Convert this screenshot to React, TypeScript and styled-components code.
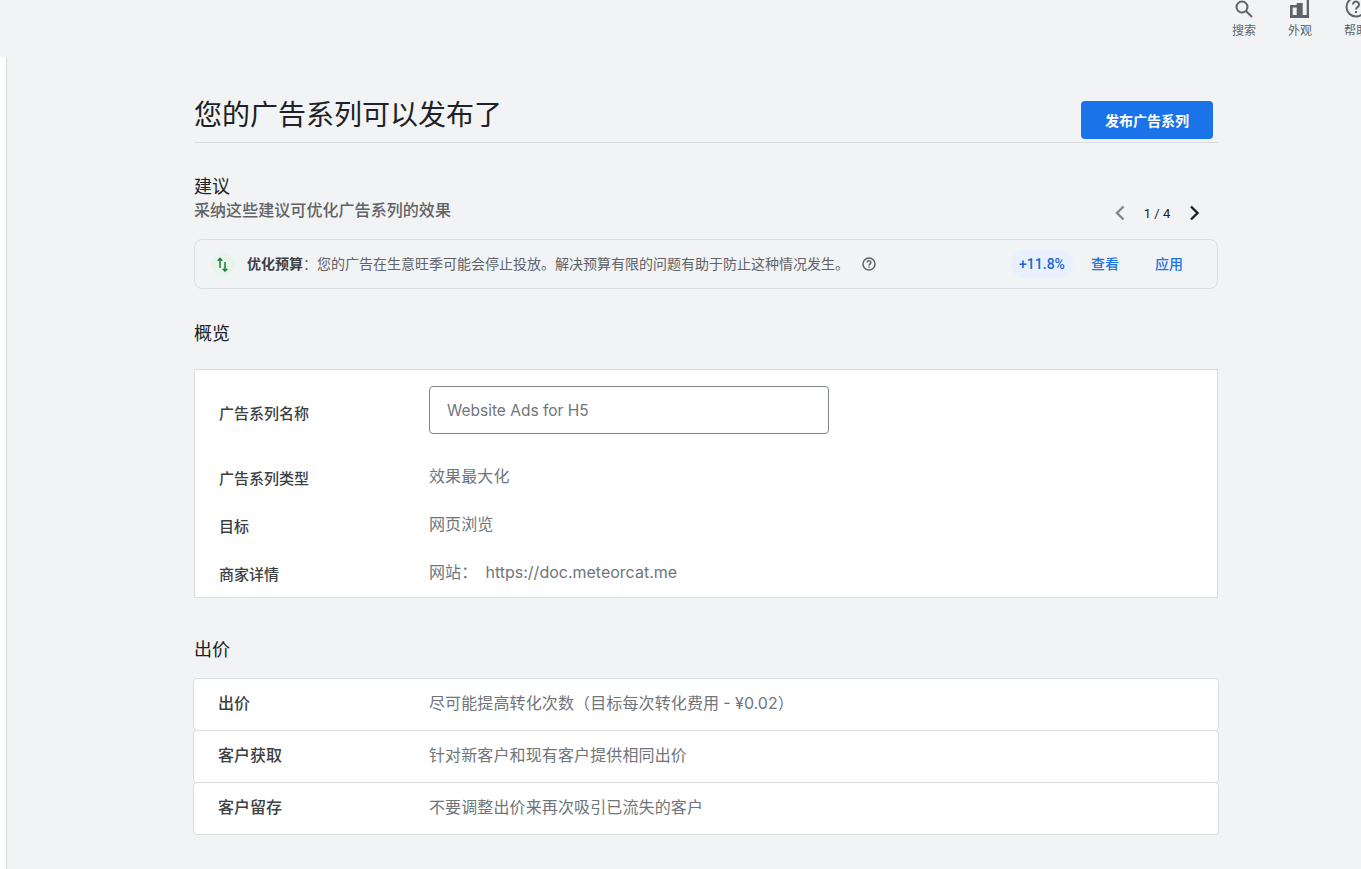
import React from 'react'
import styled, { createGlobalStyle } from 'styled-components'

const GlobalStyle = createGlobalStyle`
    html, body {
        margin: 0;
        height: 100%;
        overflow: hidden;
        background: #f1f3f4;
        font-family: Roboto, "Noto Sans CJK SC", sans-serif;
    }
`

const Page = styled.div`
    width: 1361px;
    height: 869px;
    overflow: hidden;
    display: flex;
    flex-direction: column;
`

const TopBar = styled.div`
    height: 57px;
    flex: none;
    display: flex;
    justify-content: flex-end;
    overflow: hidden;
`

const TopItems = styled.div`
    width: 168px;
    margin-right: -23px;
    margin-top: -3px;
    display: flex;
    flex: none;
`

const TopItem = styled.div`
    width: 56px;
    flex: none;
    display: flex;
    flex-direction: column;
    align-items: center;
    font-size: 12px;
    line-height: 16px;
    color: #5f6368;
    white-space: nowrap;

    svg {
        display: block;
        margin-bottom: 2px;
    }
`

const Body = styled.div`
    flex: 1;
    display: flex;
`

const SideEdge = styled.div`
    width: 6px;
    flex: none;
    background: #fff;
    border-right: 1px solid #dadce0;
`

const Main = styled.div`
    width: 1024px;
    margin-left: 187px;
    display: flex;
    flex-direction: column;
`

const TitleRow = styled.div`
    height: 85px;
    display: flex;
    justify-content: space-between;
    align-items: flex-end;
    border-bottom: 1px solid #dadce0;
`

const Title = styled.h1`
    margin: 0 0 6px;
    font-size: 28px;
    font-weight: 400;
    line-height: 40px;
    color: #202124;
`

const PublishButton = styled.button`
    width: 132px;
    height: 38px;
    margin: 0 5px 3px 0;
    border: 0;
    border-radius: 4px;
    background: #1a73e8;
    color: #fff;
    font: inherit;
    font-size: 14px;
    font-weight: 700;
`

const SectionTitle = styled.div<{ $top: number }>`
    margin-top: ${(p) => p.$top}px;
    font-size: 18px;
    line-height: 24px;
    color: #202124;
`

const SuggestHead = styled.div`
    display: flex;
    justify-content: space-between;
`

const SuggestSub = styled.div`
    margin-top: 1px;
    font-size: 16px;
    font-weight: 500;
    letter-spacing: 0.06px;
    line-height: 22px;
    color: #5f6368;
`

const Pager = styled.div`
    display: flex;
    align-items: center;
    margin: 58px 12px 0 0;
    height: 24px;
    font-size: 13px;
    color: #202124;
`

const PagerCount = styled.span`
    width: 50px;
    text-align: center;
`

const SuggestCard = styled.div`
    height: 48px;
    margin-top: 14px;
    display: flex;
    align-items: center;
    padding: 0 34px 0 16px;
    border: 1px solid #dadce0;
    border-radius: 8px;
`

const TrendBadge = styled.div`
    width: 24px;
    height: 24px;
    flex: none;
    border-radius: 50%;
    background: #e6f4ea;
    display: flex;
    align-items: center;
    justify-content: center;
`

const SuggestText = styled.div`
    margin-left: 12px;
    padding-bottom: 2px;
    flex: 1;
    display: flex;
    align-items: center;
    font-size: 14px;
    color: #5f6368;
    white-space: nowrap;

    b {
        font-weight: 700;
        color: #3c4043;
    }

    svg {
        margin: 2px 0 0 12px;
    }
`

const Uplift = styled.div`
    width: 62px;
    height: 28px;
    border-radius: 14px;
    background: #e8f0fe;
    color: #1967d2;
    font-size: 14px;
    font-weight: 500;
    display: flex;
    align-items: center;
    justify-content: center;
`

const LinkAction = styled.span<{ $left: number }>`
    margin-left: ${(p) => p.$left}px;
    padding-bottom: 2px;
    color: #1a73e8;
    font-size: 14px;
    font-weight: 500;
`

const OverviewCard = styled.div`
    height: 229px;
    margin-top: 23px;
    background: #fff;
    border: 1px solid #dadce0;
    box-sizing: border-box;
    padding: 16px 24px 0;
    display: flex;
    flex-direction: column;
`

const FieldRow = styled.div<{ $gap?: number }>`
    height: 48px;
    flex: none;
    display: flex;
    align-items: center;
    margin-bottom: ${(p) => p.$gap ?? 0}px;
`

const FieldLabel = styled.div`
    width: 210px;
    flex: none;
    padding-top: 4px;
    font-size: 15px;
    font-weight: 500;
    color: #3c4043;
`

const FieldValue = styled.div`
    font-size: 16px;
    letter-spacing: 0.1px;
    color: #70757a;
    white-space: pre;
`

const LatinText = styled.span`
    font-family: Inter, Roboto, sans-serif;
    font-size: 16px;
    letter-spacing: 0;
`

const NameInput = styled.div`
    width: 400px;
    height: 48px;
    box-sizing: border-box;
    padding-left: 17px;
    border: 1px solid #80868b;
    border-radius: 4px;
    display: flex;
    align-items: center;
    font-family: Inter, Roboto, sans-serif;
    font-size: 15.5px;
    color: #70757a;
`

const BidList = styled.div`
    margin: 16px -1px 0;
    display: flex;
    flex-direction: column;
`

const BidRow = styled.div`
    height: 53px;
    box-sizing: border-box;
    background: #fff;
    border: 1px solid #dadce0;
    border-radius: 4px;
    padding-left: 24px;
    padding-bottom: 6px;
    display: flex;
    align-items: center;

    & + & {
        margin-top: -1px;
    }
`

const BidLabel = styled.div`
    width: 211px;
    flex: none;
    font-size: 16px;
    font-weight: 500;
    color: #3c4043;
`

const BidValue = styled.div`
    font-size: 16px;
    letter-spacing: 0.12px;
    color: #70757a;
`

const App: React.FC = () => {
    return (
        <Page>
            <GlobalStyle />
            <TopBar>
                <TopItems>
                    <TopItem>
                        <svg width="24" height="24" viewBox="0 0 24 24" fill="none" stroke="#5f6368" strokeWidth="2">
                            <circle cx="10" cy="10" r="5.5" />
                            <path d="M14 14l6 6" />
                        </svg>
                        搜索
                    </TopItem>
                    <TopItem>
                        <svg width="24" height="24" viewBox="0 0 24 24" fill="#5f6368">
                            <path
                                d="M2 8H8.700V6H14.700V0H21V21H2zM4.700 10.500V18H8.700V10.500zM14.700 3V18H18.700V3z"
                                fillRule="evenodd"
                            />
                        </svg>
                        外观
                    </TopItem>
                    <TopItem>
                        <svg width="24" height="24" viewBox="0 0 24 24" fill="none" stroke="#5f6368" strokeWidth="2">
                            <circle cx="12" cy="10" r="9.5" />
                            <path d="M9 7.500a3 3 0 1 1 4.800 2.400c-1 .8-1.800 1.300-1.800 2.600M12 14v2" />
                        </svg>
                        帮助
                    </TopItem>
                </TopItems>
            </TopBar>
            <Body>
                <SideEdge />
                <Main>
                    <TitleRow>
                        <Title>您的广告系列可以发布了</Title>
                        <PublishButton>发布广告系列</PublishButton>
                    </TitleRow>
                    <SuggestHead>
                        <div>
                            <SectionTitle $top={32}>建议</SectionTitle>
                            <SuggestSub>采纳这些建议可优化广告系列的效果</SuggestSub>
                        </div>
                        <Pager>
                            <svg width="24" height="24" viewBox="0 0 24 24" fill="none" stroke="#80868b" strokeWidth="2.400">
                                <path d="M15.500 5.500L9 12l6.500 6.500" />
                            </svg>
                            <PagerCount>1 / 4</PagerCount>
                            <svg width="24" height="24" viewBox="0 0 24 24" fill="none" stroke="#202124" strokeWidth="2.400">
                                <path d="M9 5.500l6.500 6.500-6.500 6.500" />
                            </svg>
                        </Pager>
                    </SuggestHead>
                    <SuggestCard>
                        <TrendBadge>
                            <svg width="16" height="16" viewBox="0 0 16 16" fill="none" stroke="#188038" strokeWidth="1.500">
                                <path d="M5 12V2.500M2.700 4.700L5 2.400 7.300 4.700M10 6v9M7.700 12.700l2.300 2.300 2.300-2.300" />
                            </svg>
                        </TrendBadge>
                        <SuggestText>
                            <b>优化预算</b>：您的广告在生意旺季可能会停止投放。解决预算有限的问题有助于防止这种情况发生。
                            <svg width="16" height="16" viewBox="0 0 16 16" fill="none" stroke="#5f6368" strokeWidth="1.500">
                                <circle cx="8" cy="8" r="6" />
                                <path d="M6.200 6.500a1.800 1.800 0 1 1 2.900 1.400c-.6.500-1.100.8-1.100 1.500M8 10.500v1.200" />
                            </svg>
                        </SuggestText>
                        <Uplift>+11.8%</Uplift>
                        <LinkAction $left={18}>查看</LinkAction>
                        <LinkAction $left={36}>应用</LinkAction>
                    </SuggestCard>
                    <SectionTitle $top={33}>概览</SectionTitle>
                    <OverviewCard>
                        <FieldRow $gap={17}>
                            <FieldLabel>广告系列名称</FieldLabel>
                            <NameInput>Website Ads for H5</NameInput>
                        </FieldRow>
                        <FieldRow>
                            <FieldLabel>广告系列类型</FieldLabel>
                            <FieldValue>效果最大化</FieldValue>
                        </FieldRow>
                        <FieldRow>
                            <FieldLabel>目标</FieldLabel>
                            <FieldValue>网页浏览</FieldValue>
                        </FieldRow>
                        <FieldRow>
                            <FieldLabel>商家详情</FieldLabel>
                            <FieldValue>
                                网站：  <LatinText>https://doc.meteorcat.me</LatinText>
                            </FieldValue>
                        </FieldRow>
                    </OverviewCard>
                    <SectionTitle $top={40}>出价</SectionTitle>
                    <BidList>
                        <BidRow>
                            <BidLabel>出价</BidLabel>
                            <BidValue>
                                尽可能提高转化次数（目标每次转化费用 <LatinText>- ¥0.02</LatinText>）
                            </BidValue>
                        </BidRow>
                        <BidRow>
                            <BidLabel>客户获取</BidLabel>
                            <BidValue>针对新客户和现有客户提供相同出价</BidValue>
                        </BidRow>
                        <BidRow>
                            <BidLabel>客户留存</BidLabel>
                            <BidValue>不要调整出价来再次吸引已流失的客户</BidValue>
                        </BidRow>
                    </BidList>
                </Main>
            </Body>
        </Page>
    )
}

export default App
